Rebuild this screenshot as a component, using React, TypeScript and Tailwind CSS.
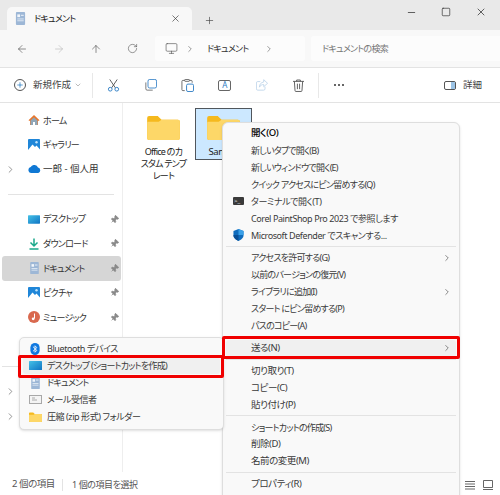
import { ArrowLeft, ArrowRight, ArrowUp, ChevronDown, ChevronRight, Minus, Monitor, Pin, Plus, RotateCw, Square, X } from "lucide-react";
import type { ReactNode } from "react";

const jp = "font-['Noto_Sans','Noto_Sans_CJK_JP',sans-serif] [font-feature-settings:'palt'] text-[9.5px] tracking-[-0.45px]";
// カタカナの多い行は詰める
const tight = "text-[9px] tracking-[-0.75px]";
const latin = "text-[9px] tracking-[-0.42px]";

function Folder({ className }: { className?: string }) {
  return (
    <svg viewBox="0 0 34 26" className={className}>
      <path d="M0 3a2 2 0 0 1 2-2h9l4 4h17a2 2 0 0 1 2 2v17a2 2 0 0 1-2 2H2a2 2 0 0 1-2-2z" fill="#f5b91e" />
      <path d="M0 8a1 1 0 0 1 1-1h11l3-2h17a2 2 0 0 1 2 2v17a2 2 0 0 1-2 2H2a2 2 0 0 1-2-2z" fill="#fdd768" />
    </svg>
  );
}

function DocIcon({ className }: { className?: string }) {
  return (
    <svg viewBox="0 0 12 14" className={className}>
      <rect x="1" y="0" width="10" height="14" rx="1" fill="#9db7d6" />
      <rect x="2.5" y="2.5" width="3" height="3" fill="#f2f6fb" />
      <rect x="6.5" y="3" width="3" height="1" fill="#f2f6fb" />
      <rect x="2.5" y="7" width="7" height="1" fill="#e2ebf5" />
      <rect x="2.5" y="9" width="7" height="1" fill="#e2ebf5" />
    </svg>
  );
}

function Picture({ className }: { className?: string }) {
  return (
    <svg viewBox="0 0 12 12" className={className}>
      <rect width="12" height="12" rx="1" fill="#1f86d8" />
      <path d="M0 11 4.500 5.500 7 8l1.500-1.500L12 10.500V12H0z" fill="#fff" />
      <circle cx="8.500" cy="3.200" r="1.200" fill="#bfe2fb" />
    </svg>
  );
}

function Desktop({ className, id }: { className?: string; id: string }) {
  return (
    <svg viewBox="0 0 13 9" className={className}>
      <defs>
        <linearGradient id={id} x1="0" y1="0" x2="1" y2="1">
          <stop offset="0" stopColor="#45c1e6" />
          <stop offset="1" stopColor="#0f74c4" />
        </linearGradient>
      </defs>
      <rect width="13" height="9" rx="0.6" fill={`url(#${id})`} />
    </svg>
  );
}

function ToolBtn({ children }: { children: ReactNode }) {
  return <div className="flex w-[37px] justify-center">{children}</div>;
}

function NavRow({ icon, label, pin, chevron, active, fit = tight }: { icon?: ReactNode; label?: string; pin?: boolean; chevron?: boolean; active?: boolean; fit?: string }) {
  return (
    <div className={`flex h-[24.6px] w-[119px] items-center rounded-[3px] ${active ? "bg-[#d6d6d6]" : ""}`}>
      <div className="flex w-[25px] shrink-0 justify-center pl-[1px] pr-[9px]">
        {chevron && <ChevronRight size={11} strokeWidth={1.5} className="text-[#666]" />}
      </div>
      <div className="flex w-[14px] shrink-0 justify-center">{icon}</div>
      <span className={`ml-[2px] flex-1 truncate text-[#333] ${fit}`}>{label}</span>
      {pin && <Pin size={9} strokeWidth={2} className="mr-[2px] rotate-45 fill-[#8a8a8a] text-[#8a8a8a]" />}
    </div>
  );
}

function MenuRow({ label, icon, arrow, bold, hover, narrow, fit = "" }: { label: string; icon?: ReactNode; arrow?: boolean; bold?: boolean; hover?: boolean; narrow?: boolean; fit?: string }) {
  return (
    <div className={`mx-[3px] flex h-[17px] items-center rounded-[3px] ${hover ? "bg-[#f0f0f0]" : ""}`}>
      <div className={`flex shrink-0 justify-center ${narrow ? "w-[24px]" : "w-[25px]"}`}>{icon}</div>
      <span className={`flex-1 whitespace-nowrap leading-none text-[#3a3a3a] ${bold ? "font-medium text-black" : ""} ${fit}`}>{label}</span>
      {arrow && <ChevronRight size={10} strokeWidth={1.5} className="mr-[4px] text-[#444]" />}
    </div>
  );
}

function Sep() {
  return <div className="mx-[3px] my-[2.25px] h-px bg-[#e3e3e3]" />;
}

export default function App() {
  return (
    <div className={`relative flex h-[495px] w-[500px] flex-col overflow-hidden bg-white ${jp}`}>
      {/* タイトルバー */}
      <div className="flex h-[30px] shrink-0 items-end bg-[#e9e9e9] pl-[7px]">
        <div className="flex h-[23px] w-[185px] items-center rounded-t-[5px] bg-[#f8f8f8] pl-[8px]">
          <DocIcon className="h-[13px] w-[11px]" />
          <span className={`ml-[8px] flex-1 text-[#222] ${tight}`}>ドキュメント</span>
          <X size={11} strokeWidth={1.4} className="mr-[11px] text-[#333]" />
        </div>
        <div className="mb-[4px] ml-[12px] flex-1">
          <Plus size={11} strokeWidth={1.4} className="text-[#444]" />
        </div>
        <div className="mb-[12px] flex items-center gap-[24px] pr-[13px]">
          <Minus size={11} strokeWidth={1.5} className="text-[#222]" />
          <Square size={10} strokeWidth={1.5} className="text-[#222]" />
          <X size={12} strokeWidth={1.4} className="text-[#222]" />
        </div>
      </div>

      {/* アドレスバー */}
      <div className="flex h-[38px] shrink-0 items-center border-b border-[#e3e3e3] bg-[#f8f8f8]">
        <div className="flex w-[155px] items-center pl-[3px] text-[#555]">
          <ToolBtn><ArrowLeft size={12} strokeWidth={1.3} /></ToolBtn>
          <ToolBtn><ArrowRight size={12} strokeWidth={1.3} className="text-[#bbb]" /></ToolBtn>
          <ToolBtn><ArrowUp size={12} strokeWidth={1.3} /></ToolBtn>
          <ToolBtn><RotateCw size={11} strokeWidth={1.3} /></ToolBtn>
        </div>
        <div className="flex h-[25px] w-[150px] items-center rounded-[3px] bg-[#fcfcfc] pl-[10px]">
          <Monitor size={13} strokeWidth={1.2} className="text-[#555]" />
          <ChevronRight size={10} strokeWidth={1.4} className="ml-[7px] text-[#555]" />
          <span className={`ml-[12px] w-[57px] pt-[1px] text-[#333] ${tight}`}>ドキュメント</span>
          <ChevronRight size={10} strokeWidth={1.4} className="text-[#555]" />
        </div>
        <div className={`ml-[6px] flex h-[25px] flex-1 items-center rounded-l-[3px] bg-[#fcfcfc] pl-[11px] pt-[1px] text-[#777] ${tight}`}>
          ドキュメントの検索
        </div>
      </div>

      {/* ツールバー */}
      <div className="flex h-[35px] shrink-0 items-center border-b border-[#e3e3e3] bg-white pr-[18px]">
        <div className="flex w-[92px] shrink-0 items-center pl-[14px]">
          <div className="flex h-[12px] w-[12px] items-center justify-center rounded-full border border-[#555]">
            <Plus size={8} strokeWidth={2} className="text-[#0f6cbd]" />
          </div>
          <span className="ml-[7px] pt-[1px] tracking-normal text-[#444]">新規作成</span>
          <ChevronDown size={8} strokeWidth={1.5} className="ml-[3px] text-[#777]" />
        </div>
        <div className="h-[25px] w-px bg-[#e8e8e8]" />
        <div className="ml-[2px] flex items-center">
          <ToolBtn>
            <svg viewBox="0 0 14 14" className="h-[13px] w-[13px]" fill="none" strokeWidth="1">
              <path d="M3 0.500 9 9.500M11 0.500 5 9.500" stroke="#555" />
              <circle cx="3.500" cy="11" r="2" stroke="#2c7cc4" />
              <circle cx="10.500" cy="11" r="2" stroke="#2c7cc4" />
            </svg>
          </ToolBtn>
          <ToolBtn>
            <svg viewBox="0 0 14 14" className="h-[12px] w-[12px]" fill="none" strokeWidth="1">
              <path d="M1 4v7.500A1.500 1.500 0 0 0 2.500 13H9" stroke="#666" />
              <rect x="3.500" y="0.500" width="10" height="10" rx="2" stroke="#2c7cc4" />
            </svg>
          </ToolBtn>
          <ToolBtn>
            <svg viewBox="0 0 14 14" className="h-[13px] w-[13px]" fill="none" strokeWidth="1">
              <path d="M4 1.500H2a1 1 0 0 0-1 1v9a1 1 0 0 0 1 1h2M9 1.500h2a1 1 0 0 1 1 1V4" stroke="#666" />
              <rect x="4" y="0.500" width="5" height="2" rx="0.500" stroke="#666" />
              <rect x="6" y="5.500" width="7.500" height="8" rx="1.500" stroke="#2c7cc4" />
            </svg>
          </ToolBtn>
          <ToolBtn>
            <div className="flex h-[11px] w-[13px] items-center justify-center rounded-[2px] border border-[#666] text-[8px] leading-none text-[#2c7cc4]">A</div>
          </ToolBtn>
          <ToolBtn>
            <svg viewBox="0 0 14 14" className="h-[12px] w-[12px]" fill="none" strokeWidth="1" stroke="#bcd4ea">
              <path d="M5 3H2a1.500 1.500 0 0 0-1.500 1.500v7A1.500 1.500 0 0 0 2 13h7a1.500 1.500 0 0 0 1.500-1.500V9" />
              <path d="M9 0.800 13.500 5 9 9V6.500C6.500 6.500 5 7.500 4 9.500 4 6 6 4 9 3.500z" />
            </svg>
          </ToolBtn>
          <ToolBtn>
            <svg viewBox="0 0 12 14" className="h-[13px] w-[11px]" fill="none" strokeWidth="1" stroke="#555">
              <path d="M0 2.500h12M4 2.500V1h4v1.500M1.500 2.500l.7 10a1 1 0 0 0 1 1h5.600a1 1 0 0 0 1-1l.7-10M4.800 5v6M7.200 5v6" />
            </svg>
          </ToolBtn>
        </div>
        <div className="ml-[1px] h-[25px] w-px bg-[#e8e8e8]" />
        <span className="ml-[15px] flex gap-[2px]">
          <i className="h-[2px] w-[2px] rounded-full bg-[#333]" />
          <i className="h-[2px] w-[2px] rounded-full bg-[#333]" />
          <i className="h-[2px] w-[2px] rounded-full bg-[#333]" />
        </span>
        <div className="ml-auto flex h-[9px] w-[12px] justify-end rounded-[2px] border border-[#555]">
          <div className="w-[4px] bg-[#9cc4e6]" />
        </div>
        <span className="ml-[7px] pt-[1px] tracking-normal text-[#444]">詳細</span>
      </div>

      {/* 本体 */}
      <div className="flex min-h-0 flex-1">
        <aside className="w-[123px] shrink-0 border-r border-[#eeeeee] pl-[2px] pt-[5px]">
          <NavRow label="ホーム" icon={<svg viewBox="0 0 12 12" className="h-[12px] w-[12px]"><path d="M6 1 0.500 6.200 1.500 7 2 6.600V11h3V8h2v3h3V6.600l.5.4 1-.8z" fill="#e9762b" /><path d="M2.500 6.500 6 3.200l3.500 3.300V11H7V8H5v3H2.500z" fill="#8fa6b8" /></svg>} />
          <NavRow label="ギャラリー" icon={<Picture className="h-[12px] w-[12px]" />} />
          <NavRow label="一郎 - 個人用" chevron fit="text-[9.5px] tracking-normal" icon={<svg viewBox="0 0 13 8" className="h-[8px] w-[13px]"><path d="M3 8a3 3 0 0 1-.3-5.900A4 4 0 0 1 10 2.600 2.800 2.800 0 0 1 10.300 8z" fill="#0f78d4" /></svg>} />
          <div className="my-[12px] ml-[6px] h-px w-[106px] bg-[#e3e3e3]" />
          <NavRow label="デスクトップ" pin icon={<Desktop id="dt-nav" className="h-[9px] w-[12px]" />} />
          <NavRow label="ダウンロード" pin icon={<svg viewBox="0 0 12 12" className="h-[12px] w-[12px]" fill="none" stroke="#1aa88a" strokeWidth="1.500"><path d="M6 0.500v7M2.500 4.500 6 8l3.500-3.500M1.500 11h9" /></svg>} />
          <NavRow label="ドキュメント" pin active icon={<DocIcon className="h-[12px] w-[11px]" />} />
          <NavRow label="ピクチャ" pin icon={<Picture className="h-[12px] w-[12px]" />} />
          <NavRow label="ミュージック" pin icon={<svg viewBox="0 0 12 12" className="h-[12px] w-[12px]"><circle cx="6" cy="6" r="6" fill="#d9694f" /><path d="M6.500 2.500v5" stroke="#fff" strokeWidth="1" /><circle cx="5.200" cy="7.800" r="1.400" fill="#fff" /></svg>} />
          <NavRow pin icon={<div className="h-[10px] w-[12px] rounded-[1px] bg-[#c9a9e6]" />} />
          <div className="my-[12px] h-px w-[106px] bg-[#e3e3e3]" />
          <NavRow chevron />
          <NavRow chevron />
        </aside>

        <main className="flex flex-1 items-start gap-[3px] pl-[12px] pt-[5px]">
          <div className="flex h-[52px] w-[57px] flex-col items-center pt-[7px]">
            <Folder className="h-[25px] w-[33px] shrink-0" />
            <p className={`mt-[6px] w-[57px] text-center leading-[12px] text-[#222] ${tight}`}>Office のカ<br />スタム テンプ<br />レート</p>
          </div>
          <div className="flex h-[52px] w-[57px] flex-col items-center border border-[#50565c] bg-[#cce8ff] pt-[6px]">
            <Folder className="h-[25px] w-[33px] shrink-0" />
            <p className="mt-[6px] w-[56px] pl-[13px] leading-[12px] text-[#222]">Sample</p>
          </div>
        </main>
      </div>

      {/* ステータスバー */}
      <div className="flex h-[23px] shrink-0 items-center pl-[12px] pt-[2px] text-[#555]">
        <span className="w-[50px]">2 個の項目</span>
        <span className="h-[12px] w-px bg-[#e3e3e3]" />
        <span className={`ml-[9px] ${latin}`}>1 個の項目を選択</span>
        <div className="ml-auto flex items-center gap-[8px] pr-[7px]">
          <svg viewBox="0 0 10 10" className="h-[10px] w-[10px]" fill="none" stroke="#555" strokeWidth="0.900"><path d="M0 1.500h10M0 4h10M0 6.500h10M0 9h10" /></svg>
          <svg viewBox="0 0 10 10" className="h-[10px] w-[10px]" fill="none" stroke="#555" strokeWidth="0.900"><path d="M0.500 0.500h9v7h-9zM0 9.500h10" /></svg>
        </div>
      </div>

      {/* コンテキストメニュー */}
      <div className="absolute left-[222px] top-[122px] h-[380px] w-[238px] rounded-[6px] border border-[#dedede] bg-[#f9f9f9] pt-[1.500px] shadow-sm">
        <MenuRow label="開く(O)" bold />
        <MenuRow label="新しいタブで開く(B)" fit={tight} />
        <MenuRow label="新しいウィンドウで開く(E)" fit={tight} />
        <MenuRow label="クイック アクセスにピン留めする(Q)" fit={tight} />
        <MenuRow label="ターミナルで開く(T)" fit={latin} icon={<div className="flex h-[8px] w-[11px] items-center rounded-[1px] bg-[#3a3a3a] pl-[1px] text-[6px] leading-none tracking-normal text-white">&gt;_</div>} />
        <MenuRow label="Corel PaintShop Pro 2023 で参照します" fit={latin} />
        <MenuRow label="Microsoft Defender でスキャンする..." fit={latin} icon={<svg viewBox="0 0 12 13" className="h-[12px] w-[11px]"><path d="M6 0 11.500 2v4.500C11.500 10 8.500 12 6 13 3.500 12 .5 10 .5 6.500V2z" fill="#0f6cbd" /><path d="M6 0 11.500 2v4.500H6z" fill="#3aa0e8" /><path d="M.5 6.500H6V13C3.500 12 .5 10 .5 6.500z" fill="#0a4f96" /></svg>} />
        <Sep />
        <MenuRow label="アクセスを許可する(G)" arrow fit={tight} />
        <MenuRow label="以前のバージョンの復元(V)" fit={tight} />
        <MenuRow label="ライブラリに追加(I)" arrow fit={tight} />
        <MenuRow label="スタート にピン留めする(P)" fit={tight} />
        <MenuRow label="パスのコピー(A)" fit={tight} />
        <Sep />
        <MenuRow label="送る(N)" arrow hover />
        <Sep />
        <MenuRow label="切り取り(T)" />
        <MenuRow label="コピー(C)" />
        <MenuRow label="貼り付け(P)" />
        <Sep />
        <MenuRow label="ショートカットの作成(S)" fit={tight} />
        <MenuRow label="削除(D)" />
        <MenuRow label="名前の変更(M)" />
        <Sep />
        <MenuRow label="プロパティ(R)" />
      </div>

      {/* 送るサブメニュー */}
      <div className="absolute left-[19px] top-[337px] h-[93px] w-[205px] rounded-[5px] border border-[#dedede] bg-[#f9f9f9] pt-[2px] shadow-sm">
        <MenuRow narrow label="Bluetooth デバイス" fit={latin} icon={<svg viewBox="0 0 10 13" className="h-[12px] w-[10px]"><rect width="10" height="13" rx="5" fill="#0f78e0" /><path d="M2.800 4 7 8 5 10V3l2 2-4.200 4" fill="none" stroke="#fff" strokeWidth="0.900" /></svg>} />
        <MenuRow narrow label="デスクトップ (ショートカットを作成)" hover fit={tight} icon={<Desktop id="dt-send" className="h-[9px] w-[13px]" />} />
        <MenuRow narrow label="ドキュメント" fit={tight} icon={<DocIcon className="h-[12px] w-[11px]" />} />
        <MenuRow narrow label="メール受信者" fit={latin} icon={<svg viewBox="0 0 13 9" className="h-[9px] w-[13px]"><rect x=".5" y=".5" width="12" height="8" fill="#f4f4f4" stroke="#a8a8a8" /><path d="M3 3h3M3 5h5" stroke="#999" strokeWidth=".8" /></svg>} />
        <MenuRow narrow label="圧縮 (zip 形式) フォルダー" fit={latin} icon={<Folder className="h-[10px] w-[13px]" />} />
      </div>

      {/* 赤枠 */}
      <div className="absolute left-[222px] top-[336px] h-[23px] w-[238px] rounded-[2px] border-[3px] border-[#f00000]" />
      <div className="absolute left-[18px] top-[355px] h-[23px] w-[206px] rounded-[2px] border-[3px] border-[#f00000]" />
    </div>
  );
}
